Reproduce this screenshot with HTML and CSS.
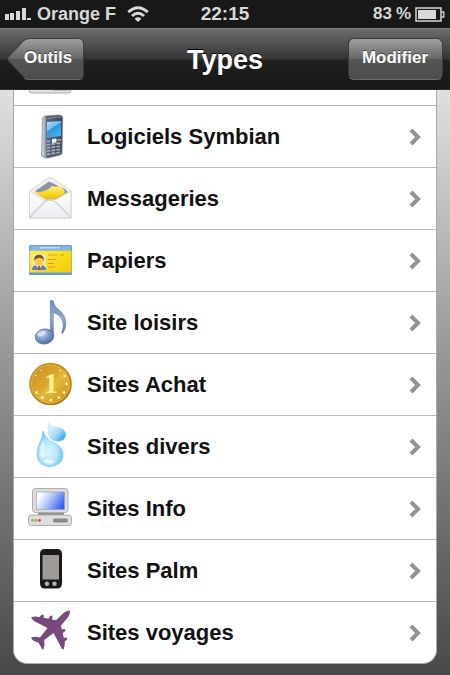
FILE: index.html
```html
<!DOCTYPE html>
<html lang="fr">
<head>
    <meta charset="UTF-8">
    <meta name="viewport" content="width=device-width, initial-scale=1.0">
    <title>Types</title>
    <link rel="stylesheet" href="styles.css">
</head>
<body>
    <div class="status-bar">
        <div class="status-left">
            <svg class="signal" width="27" height="12" viewBox="0 0 27 12" fill="#d8d8d8">
                <rect x="0" y="6" width="4" height="6"/>
                <rect x="5" y="5" width="4" height="7"/>
                <rect x="11" y="3" width="4" height="9"/>
                <rect x="17" y="0" width="4" height="12"/>
                <rect x="22" y="10" width="4" height="2"/>
            </svg>
            <span>Orange F</span>
            <svg class="wifi" width="22" height="16" viewBox="0 0 22 16" fill="none" stroke="#d8d8d8" stroke-width="3">
                <path d="M1.3 6.2 Q11 -2.8 20.7 6.2"/>
                <path d="M5 10 Q11 4.4 17 10"/>
                <path d="M11 16 L7.6 12.7 Q11 9.8 14.4 12.7 Z" fill="#d8d8d8" stroke="none"/>
            </svg>
        </div>
        <div class="status-time">22:15</div>
        <div class="status-right">
            <span>83</span>
            <span>%</span>
            <svg class="battery" width="30" height="15" viewBox="0 0 30 15">
                <rect x="1" y="1" width="25" height="13" fill="none" stroke="#d8d8d8" stroke-width="1.5"/>
                <rect x="3" y="3" width="18" height="9" fill="#d8d8d8"/>
                <path d="M26.5 5 H28.8 V10 H26.5" fill="none" stroke="#d8d8d8" stroke-width="1.3"/>
            </svg>
        </div>
    </div>

    <header class="nav-bar">
        <button type="button" class="back-button">
            <svg class="back-shape" viewBox="0 0 76 42" preserveAspectRatio="none">
                <defs>
                    <linearGradient id="back-fill" x1="0" y1="0" x2="0" y2="1">
                        <stop offset="0" stop-color="#a0a0a0"/>
                        <stop offset="0.5" stop-color="#666"/>
                        <stop offset="0.51" stop-color="#555"/>
                        <stop offset="1" stop-color="#4d4d4d"/>
                    </linearGradient>
                </defs>
                <path d="M22 0.500 H70 Q75.500 0.500 75.500 6 V36 Q75.500 41 70 41 H22 Q18 41 15.500 38 L1 22.500 Q0 21 1 19.500 L15.500 3.500 Q18 0.500 22 0.500 Z" fill="url(#back-fill)" stroke="#3a3a3a"/>
                <path d="M17 40 Q19 41.500 22 41.500 H70 Q73 41.500 74.500 40" fill="none" stroke="#6c6c6c"/>
            </svg>
            <span class="back-label">Outils</span>
        </button>
        <h1>Types</h1>
        <button type="button" class="edit-button">Modifier</button>
    </header>

    <main>
        <ul class="list">
            <li>
                <div class="row">
                    <svg class="icon" viewBox="0 0 44 44">
                        <rect x="1" y="29" width="42" height="11" rx="3" fill="#e2e2e2" stroke="#aaa"/>
                        <rect x="25" y="36" width="15" height="2" fill="#bbb"/>
                    </svg>
                </div>
            </li>
            <li>
                <a class="row" href="#">
                    <svg class="icon" viewBox="0 0 44 44">
                        <defs>
                            <linearGradient id="phone-body" x1="0" y1="0" x2="1" y2="0">
                                <stop offset="0" stop-color="#e3e7ec"/>
                                <stop offset="0.16" stop-color="#a4abb5"/>
                                <stop offset="0.25" stop-color="#5a6473"/>
                                <stop offset="1" stop-color="#3c4655"/>
                            </linearGradient>
                            <linearGradient id="phone-screen" x1="0" y1="0" x2="0.6" y2="1">
                                <stop offset="0" stop-color="#b8e2fb"/>
                                <stop offset="0.45" stop-color="#70c1f5"/>
                                <stop offset="0.5" stop-color="#2f92e0"/>
                                <stop offset="1" stop-color="#45b2f2"/>
                            </linearGradient>
                        </defs>
                        <path d="M14.500 3 Q15 1.500 17 1 L30 0 Q34.500 -0.300 34.700 3 L34 38 Q34 39.500 32 40 L20 43 Q14 43 13.500 40 Z" fill="url(#phone-body)" stroke="#7b8492" stroke-width="0.7"/>
                        <path d="M19.500 4 Q26 1.500 33 2" fill="none" stroke="#8d98a6"/>
                        <path d="M19 7 L33.300 6 L33 21 L18.500 23 Z" fill="url(#phone-screen)"/>
                        <path d="M24 24 L28.500 23.400 V27.500 L24 28 Z" fill="#eef3f7"/>
                        <g stroke="#a3adba" stroke-width="1.7" fill="none" stroke-dasharray="3.800 1.200">
                            <path d="M18.500 26.500 L23 26"/>
                            <path d="M29.500 25.200 L33.500 24.700"/>
                            <path d="M18.500 29.800 L33 28"/>
                            <path d="M18.500 33 L33 31.200"/>
                            <path d="M18.500 36.200 L33 34.400"/>
                            <path d="M18.500 39.400 L33 37.200"/>
                        </g>
                    </svg>
                    <span class="label">Logiciels Symbian</span>
                    <svg class="chevron" viewBox="0 0 12 18"><path d="M2 2 L9 9 L2 16"/></svg>
                </a>
            </li>
            <li>
                <a class="row" href="#">
                    <svg class="icon" viewBox="0 0 44 44">
                        <defs>
                            <linearGradient id="mail-paper" x1="0" y1="0" x2="0" y2="1">
                                <stop offset="0" stop-color="#fdf0a0"/>
                                <stop offset="0.5" stop-color="#fbdc35"/>
                                <stop offset="1" stop-color="#e8b80c"/>
                            </linearGradient>
                            <linearGradient id="mail-front" x1="0" y1="0" x2="0" y2="1">
                                <stop offset="0" stop-color="#ffffff"/>
                                <stop offset="1" stop-color="#ececf1"/>
                            </linearGradient>
                        </defs>
                        <path d="M1.500 14 L20 1 Q22 -0.500 24 1 L43 14 V41 H1.500 Z" fill="#f1f1f4" stroke="#d8d8de"/>
                        <path d="M7 14 L21 4.500 L37 12 L40 15 L24 24 Z" fill="#8d96a5"/>
                        <path d="M1.500 14 L16 23.500 Q22 20 28 22.500 L43 14 V41 H1.500 Z" fill="url(#mail-front)" stroke="#d4d4da"/>
                        <path d="M6.500 15.500 Q19 15 24 9 Q29 11 33 7.500 L34.500 11 L37 15 L36 17 L28 21.500 Q22 24.500 16 21.500 Z" fill="url(#mail-paper)"/>
                        <path d="M2 40 L16 25.500 Q22 20.500 28 25.500 L42.500 40" fill="none" stroke="#d0d0d6" stroke-width="1.500"/>
                    </svg>
                    <span class="label">Messageries</span>
                    <svg class="chevron" viewBox="0 0 12 18"><path d="M2 2 L9 9 L2 16"/></svg>
                </a>
            </li>
            <li>
                <a class="row" href="#">
                    <svg class="icon" viewBox="0 0 44 44">
                        <defs>
                            <linearGradient id="card-fill" x1="0" y1="0" x2="1" y2="1">
                                <stop offset="0" stop-color="#ffee54"/>
                                <stop offset="0.5" stop-color="#fbdc1c"/>
                                <stop offset="1" stop-color="#f3c90e"/>
                            </linearGradient>
                        </defs>
                        <rect x="1" y="6" width="43" height="30" rx="1.500" fill="#639bd8"/>
                        <rect x="2" y="7" width="41" height="4" fill="#82b5e8"/>
                        <path d="M12 8.700 H32" stroke="#d5e9fa" stroke-width="1.500" stroke-dasharray="2 0.800"/>
                        <rect x="1.500" y="11.500" width="42" height="22" fill="url(#card-fill)"/>
                        <rect x="4" y="15" width="14" height="16" fill="#f3e6a5"/>
                        <path d="M4 31 Q4 26.500 9 26 H13 Q18 26.500 18 31 Z" fill="#5482c2"/>
                        <path d="M8 26 L11 30.500 L14 26 Z" fill="#fff"/>
                        <path d="M10 27 H12 L12.300 31 H9.800 Z" fill="#d4453b"/>
                        <ellipse cx="11" cy="22" rx="4" ry="5" fill="#ffc83c"/>
                        <path d="M6.200 22 Q5.500 16 11 15.800 Q16.500 16 15.700 22 Q14.500 18.800 11.500 18.800 Q8 18.800 6.200 22 Z" fill="#77502c"/>
                        <g stroke="#c5a43d" stroke-width="1" fill="none">
                            <path d="M20 16 H29 M32 16 H36"/>
                            <path d="M20 20.500 H28"/>
                            <path d="M20 24.500 H26"/>
                            <path d="M20 28 H27"/>
                        </g>
                    </svg>
                    <span class="label">Papiers</span>
                    <svg class="chevron" viewBox="0 0 12 18"><path d="M2 2 L9 9 L2 16"/></svg>
                </a>
            </li>
            <li>
                <a class="row" href="#">
                    <svg class="icon" viewBox="0 0 44 44">
                        <defs>
                            <radialGradient id="note-head" cx="0.4" cy="0.3" r="0.7">
                                <stop offset="0" stop-color="#d3e0f1"/>
                                <stop offset="0.5" stop-color="#819dc8"/>
                                <stop offset="1" stop-color="#4e6ba3"/>
                            </radialGradient>
                            <linearGradient id="note-stem" x1="0" y1="0" x2="0" y2="1">
                                <stop offset="0" stop-color="#6d88b9"/>
                                <stop offset="0.5" stop-color="#94add1"/>
                                <stop offset="1" stop-color="#536fa7"/>
                            </linearGradient>
                        </defs>
                        <path d="M22.300 0 Q24 -1.500 25.200 0 Q26 5 30 8 Q38 14 37.800 23 Q37.500 29 34.500 32.500 Q33.500 32.500 34 31 Q37 22 32.500 16 Q29.500 12.500 25.300 11.500 V36 H22.300 Z" fill="url(#note-stem)" stroke="#5b76aa" stroke-width="0.600"/>
                        <ellipse cx="16.500" cy="35.500" rx="9.300" ry="7.500" transform="rotate(-10 16.500 35.500)" fill="url(#note-head)" stroke="#5670a4" stroke-width="0.800"/>
                        <ellipse cx="13.500" cy="32.500" rx="4.500" ry="2.200" transform="rotate(-18 13.500 32.500)" fill="#dfe9f6" opacity="0.700"/>
                    </svg>
                    <span class="label">Site loisirs</span>
                    <svg class="chevron" viewBox="0 0 12 18"><path d="M2 2 L9 9 L2 16"/></svg>
                </a>
            </li>
            <li>
                <a class="row" href="#">
                    <svg class="icon" viewBox="0 0 44 44">
                        <defs>
                            <linearGradient id="coin-rim" x1="0" y1="0" x2="1" y2="1">
                                <stop offset="0" stop-color="#cf9a28"/>
                                <stop offset="0.5" stop-color="#c28a1c"/>
                                <stop offset="1" stop-color="#a56c10"/>
                            </linearGradient>
                            <linearGradient id="coin-face" x1="0" y1="0" x2="1" y2="1">
                                <stop offset="0" stop-color="#c68d20"/>
                                <stop offset="0.45" stop-color="#dba92f"/>
                                <stop offset="0.55" stop-color="#e6b93f"/>
                                <stop offset="1" stop-color="#c68516"/>
                            </linearGradient>
                        </defs>
                        <circle cx="22.500" cy="21" r="21.300" fill="url(#coin-rim)"/>
                        <circle cx="22.500" cy="21" r="19" fill="url(#coin-face)" stroke="#e0b94b" stroke-width="1"/>
                        <g fill="#fff0a8">
                            <circle cx="8" cy="12.500" r="0.800"/>
                            <circle cx="13" cy="7.500" r="0.800"/>
                            <circle cx="32" cy="7.500" r="1"/>
                            <circle cx="37" cy="13" r="1.300"/>
                            <circle cx="38.500" cy="21" r="1.400"/>
                            <circle cx="36" cy="29.500" r="1.500"/>
                            <circle cx="31" cy="34.500" r="1.500"/>
                            <circle cx="23" cy="37" r="1.500"/>
                            <circle cx="14.500" cy="34.500" r="1.500"/>
                            <circle cx="8.500" cy="29.500" r="1.500"/>
                        </g>
                        <text class="coin-number" x="23" y="30" text-anchor="middle">1</text>
                    </svg>
                    <span class="label">Sites Achat</span>
                    <svg class="chevron" viewBox="0 0 12 18"><path d="M2 2 L9 9 L2 16"/></svg>
                </a>
            </li>
            <li>
                <a class="row" href="#">
                    <svg class="icon" viewBox="0 0 44 44">
                        <defs>
                            <radialGradient id="drop-fill" cx="0.45" cy="0.6" r="0.6">
                                <stop offset="0" stop-color="#dcf5fe"/>
                                <stop offset="0.55" stop-color="#b4e6fb"/>
                                <stop offset="1" stop-color="#55bbee"/>
                            </radialGradient>
                            <linearGradient id="drop-small" x1="0" y1="0" x2="1" y2="0.800">
                                <stop offset="0" stop-color="#eefaff"/>
                                <stop offset="0.6" stop-color="#9edaf6"/>
                                <stop offset="1" stop-color="#2b9be0"/>
                            </linearGradient>
                        </defs>
                        <path d="M20.500 -2 Q23 2 30 2.500 Q38 4 38 10 Q37 16.500 29.500 16.500 Q21.500 16 20.500 8.500 Q20 4 20.500 -2 Z" fill="url(#drop-small)" stroke="#b5e4f8" stroke-width="0.700"/>
                        <path d="M15 6 Q17 14 26.500 18 Q36 23 35 31 Q33 41.500 22 41.500 Q10.500 41 9 31 Q8.500 24 12 17 Q15 11.500 15 6 Z" fill="url(#drop-fill)" stroke="#86cff2" stroke-width="0.800"/>
                        <path d="M11.500 31 Q11 22 15.500 15 Q16 25 18 31 Q14 34 11.500 31 Z" fill="#f2fcff" opacity="0.600"/>
                        <path d="M15 36 Q20 40.500 27 37 Q23 34 18 34 Z" fill="#fff" opacity="0.700"/>
                    </svg>
                    <span class="label">Sites divers</span>
                    <svg class="chevron" viewBox="0 0 12 18"><path d="M2 2 L9 9 L2 16"/></svg>
                </a>
            </li>
            <li>
                <a class="row" href="#">
                    <svg class="icon" viewBox="0 0 44 44">
                        <defs>
                            <linearGradient id="pc-screen" x1="0" y1="0.300" x2="1" y2="0.700">
                                <stop offset="0.100" stop-color="#fafcff"/>
                                <stop offset="0.500" stop-color="#a6bdfc"/>
                                <stop offset="1" stop-color="#325bf0"/>
                            </linearGradient>
                        </defs>
                        <rect x="10" y="24" width="26" height="5" fill="#8e8e8e"/>
                        <rect x="4.500" y="1.500" width="35.500" height="24" rx="3" fill="#dcdcdc" stroke="#b0b0b0"/>
                        <rect x="8.500" y="5" width="28" height="17.500" fill="url(#pc-screen)" stroke="#9b9b9b" stroke-width="0.600"/>
                        <rect x="0.500" y="28" width="43" height="10.500" rx="3" fill="#dedede" stroke="#adadad"/>
                        <rect x="25" y="31.500" width="15" height="4" rx="1.500" fill="#888"/>
                        <circle cx="4.500" cy="33.300" r="1.400" fill="#7fbf5b"/>
                        <circle cx="8" cy="33.300" r="1.400" fill="#b5a04e"/>
                        <circle cx="11.500" cy="33.300" r="1.400" fill="#cf4131"/>
                    </svg>
                    <span class="label">Sites Info</span>
                    <svg class="chevron" viewBox="0 0 12 18"><path d="M2 2 L9 9 L2 16"/></svg>
                </a>
            </li>
            <li>
                <a class="row" href="#">
                    <svg class="icon" viewBox="0 0 44 44">
                        <path d="M16 0 H30 Q34 0.500 34 5 V34 Q34 39 30 39.500 H16 Q12 39 12 34 V5 Q12 0.500 16 0 Z" fill="#191919"/>
                        <rect x="14.500" y="6" width="16.500" height="24.500" fill="#9d9a98"/>
                        <circle cx="19" cy="34.800" r="2.200" fill="#b5b5b5"/>
                        <circle cx="26.500" cy="34.800" r="2.200" fill="#b5b5b5"/>
                    </svg>
                    <span class="label">Sites Palm</span>
                    <svg class="chevron" viewBox="0 0 12 18"><path d="M2 2 L9 9 L2 16"/></svg>
                </a>
            </li>
            <li>
                <a class="row" href="#">
                    <svg class="icon" viewBox="0 0 44 44">
                        <path d="M41.500 -0.500 Q43 2.500 39 7.500 L33 14.500 L33.800 18.500 Q36.500 17.500 37.500 18.800 Q37.500 20.500 34.800 22 L35.800 27 Q38.500 26 39.300 27.300 Q39.300 29.200 36.800 30.500 Q37 34.500 35.500 38.500 Q34 38.800 33 36 L25.500 22 L16.300 29 Q17 34 15.500 38.500 Q14 39 13 36 L10.500 31.500 Q5 30.500 3 27 Q5 25 12 26.500 L19.500 17 L6 10 Q3.500 8 3.200 6 Q7 5 11.500 6 Q13 3.200 15.500 3.500 Q16.300 4.500 15.500 6.800 L20.500 7.700 Q22 4.200 24 4.500 Q25.200 5.500 24 8.500 L28 9.300 L34 3.500 Q38 -0.500 41.500 -0.500 Z" fill="#79497c"/>
                    </svg>
                    <span class="label">Sites voyages</span>
                    <svg class="chevron" viewBox="0 0 12 18"><path d="M2 2 L9 9 L2 16"/></svg>
                </a>
            </li>
        </ul>
    </main>
</body>
</html>
```

FILE: styles.css
```css
* {
    box-sizing: border-box;
}

body {
    display: flex;
    flex-direction: column;
    min-height: 100vh;
    margin: 0;
    font-family: "Liberation Sans", Arial, sans-serif;
    font-weight: bold;
    background-color: #4a4a4a;
}

/* Status bar */
.status-bar {
    display: grid;
    grid-template-columns: 1fr auto 1fr;
    align-items: center;
    height: 28px;
    padding: 0 5px;
    background-color: #181818;
    color: #d8d8d8;
    font-size: 18px;
}

.status-left,
.status-right {
    display: flex;
    align-items: center;
}

.status-left {
    gap: 5px;
}

.status-time {
    font-size: 19px;
}

.status-right {
    justify-content: flex-end;
    gap: 4px;
    font-size: 17px;
}

.wifi {
    margin-left: 6px;
}

/* Navigation bar */
.nav-bar {
    display: grid;
    grid-template-columns: 1fr auto 1fr;
    align-items: center;
    height: 62px;
    padding: 0 7px;
    border-top: 1px solid #808080;
    border-bottom: 1px solid #2c2c2c;
    background: linear-gradient(#6c6c6c, #343434 50%, #202020 52%, #161616);
    color: #fff;
}

h1 {
    margin: 0;
    padding-top: 2px;
    font-size: 27px;
    line-height: 32px;
    text-shadow: 0 -1px 0 #000;
}

.nav-bar button {
    height: 42px;
    font-family: inherit;
    font-size: 17px;
    font-weight: bold;
    line-height: 20px;
    color: #fff;
    text-shadow: 0 -1px 0 #444;
}

.back-button {
    position: relative;
    justify-self: start;
    padding: 0 12px 2px 17px;
    border: 0;
    background: none;
}

.back-shape {
    position: absolute;
    top: 0;
    left: 0;
    width: 100%;
    height: 100%;
}

.back-label {
    position: relative;
}

.edit-button {
    justify-self: end;
    padding: 0 14px 2px 13px;
    border: 1px solid #3a3a3a;
    border-bottom-color: #6c6c6c;
    border-radius: 6px;
    background: linear-gradient(#a0a0a0, #666 50%, #555 51%, #4d4d4d);
}

/* Grouped list */
main {
    flex: 1;
    padding: 0 13px 11px;
    overflow: hidden;
    background: linear-gradient(#e0e0e0, #9c9c9c 42%, #484848);
}

/* the list is scrolled, its upper rows are under the nav bar */
.list {
    margin: -46px 0 0;
    padding: 0;
    list-style: none;
    background-color: #fff;
    border: 1px solid #a8a8a8;
    border-top: 0;
    border-radius: 0 0 14px 14px;
}

.list li + li {
    border-top: 1px solid #b8b8b8;
}

.row {
    display: flex;
    align-items: center;
    gap: 15px;
    height: 61px;
    padding: 1px 15px 0 14px;
    color: #111;
    text-decoration: none;
}

.icon {
    flex: none;
    width: 44px;
    height: 44px;
    overflow: visible;
}

.label {
    flex: 1;
    font-size: 22px;
    line-height: 28px;
}

.chevron {
    flex: none;
    width: 12px;
    height: 18px;
    fill: none;
    stroke: #929292;
    stroke-width: 4;
}

.coin-number {
    font-family: "Liberation Serif", serif;
    font-size: 29px;
    fill: #ffee8a;
}
```
